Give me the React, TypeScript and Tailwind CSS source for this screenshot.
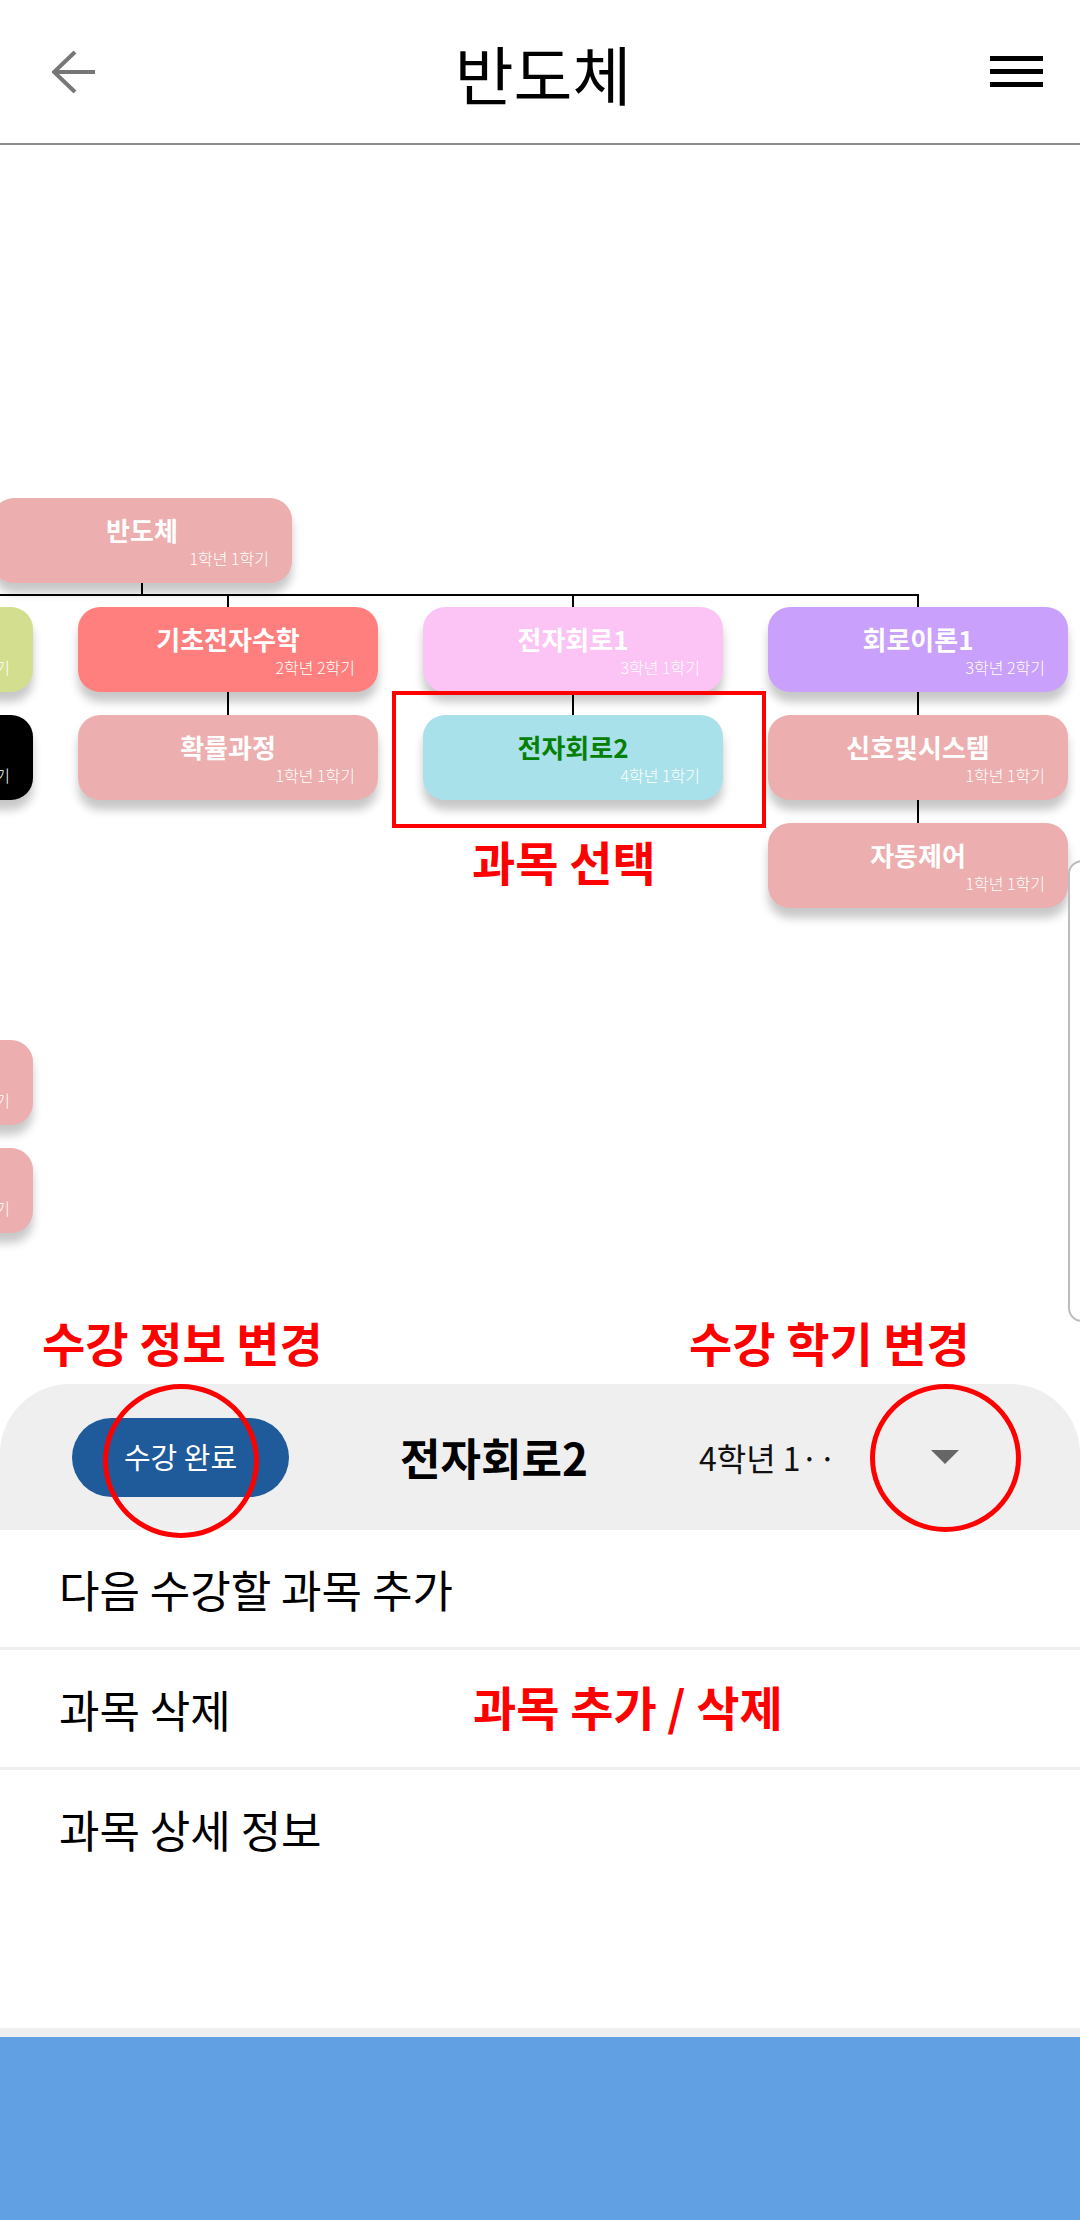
import React from "react";

type Node = {
  title: string;
  sub: string;
  left: number;
  top: number;
  bg: string;
  text?: string;
};

// columns are 300 wide with a 45px gap, rows are 85 tall with a 23px gap
const colLeft = (c: number) => 78 + (c - 1) * 345;
const rowTop = (r: number) => 462 + (r - 1) * 108;

const nodes: Node[] = [
  { title: "반도체", sub: "1학년 1학기", left: -8, top: 353, bg: "#ecaeae" },
  { title: "선형대수", sub: "1학년 1학기", left: colLeft(0), top: rowTop(1), bg: "#d3df8e" },
  { title: "물리", sub: "1학년 1학기", left: colLeft(0), top: rowTop(2), bg: "#000000" },
  { title: "공학수학", sub: "1학년 1학기", left: colLeft(0), top: 895, bg: "#ecaeae" },
  { title: "전자기학", sub: "1학년 1학기", left: colLeft(0), top: 1003, bg: "#ecaeae" },
  { title: "기초전자수학", sub: "2학년 2학기", left: colLeft(1), top: rowTop(1), bg: "#ff7f7e" },
  { title: "확률과정", sub: "1학년 1학기", left: colLeft(1), top: rowTop(2), bg: "#ecaeae" },
  { title: "전자회로1", sub: "3학년 1학기", left: colLeft(2), top: rowTop(1), bg: "#fbc4f4" },
  { title: "전자회로2", sub: "4학년 1학기", left: colLeft(2), top: rowTop(2), bg: "#a9e1ea", text: "#058005" },
  { title: "회로이론1", sub: "3학년 2학기", left: colLeft(3), top: rowTop(1), bg: "#c9a0fb" },
  { title: "신호및시스템", sub: "1학년 1학기", left: colLeft(3), top: rowTop(2), bg: "#ecaeae" },
  { title: "자동제어", sub: "1학년 1학기", left: colLeft(3), top: rowTop(3), bg: "#ecaeae" },
];

// vertical connector segments: x, top, height
const ticks = [
  { x: 141, top: 438, h: 12 },
  { x: 227, top: 449, h: 13 },
  { x: 572, top: 449, h: 13 },
  { x: 917, top: 449, h: 13 },
  { x: 227, top: 547, h: 23 },
  { x: 572, top: 547, h: 23 },
  { x: 917, top: 547, h: 23 },
  { x: 917, top: 655, h: 23 },
];

function CourseNode({ node }: { node: Node }) {
  return (
    <div
      className="absolute w-[300px] h-[85px] rounded-[22px] shadow-[0_10px_10px_rgba(0,0,0,0.22)]"
      style={{ left: node.left, top: node.top, backgroundColor: node.bg }}
    >
      <div
        className="pt-[15px] text-center text-[26px] leading-[34px] font-bold"
        style={{ color: node.text ?? "#ffffff" }}
      >
        {node.title}
      </div>
      <div className="pr-[23px] text-right text-[16px] leading-[22px] text-white font-light">
        {node.sub}
      </div>
    </div>
  );
}

const listItems = ["다음 수강할 과목 추가", "과목 삭제", "과목 상세 정보"];

export default function App() {
  return (
    <div className="relative w-[1080px] h-[2220px] flex flex-col bg-white overflow-hidden font-['Noto_Sans_CJK_KR','Noto_Sans',sans-serif]">
      {/* Header */}
      <div className="h-[145px] shrink-0 flex items-center justify-between border-b-2 border-[#8c8c8c]">
        <button className="ml-[52px] w-[44px] h-[44px]">
          <svg width="44" height="44" viewBox="0 0 44 44" fill="none">
            <path d="M23 2 L2 22 L23 42 M2 22 H43" stroke="#777777" strokeWidth="4" />
          </svg>
        </button>
        <div className="text-[64px] leading-none text-black">반도체</div>
        <button className="mr-[37px] w-[53px] flex flex-col gap-[8px]">
          <span className="block h-[5px] bg-black" />
          <span className="block h-[5px] bg-black" />
          <span className="block h-[5px] bg-black" />
        </button>
      </div>

      {/* Tree canvas */}
      <div className="relative h-[1239px] shrink-0">
        <div className="absolute left-0 top-[449px] w-[919px] h-[2px] bg-black" />
        {ticks.map((t, i) => (
          <div
            key={i}
            className="absolute w-[2px] bg-black"
            style={{ left: t.x, top: t.top, height: t.h }}
          />
        ))}
        {nodes.map((n) => (
          <CourseNode key={n.title} node={n} />
        ))}

        {/* side panel peeking in */}
        <div className="absolute left-[1068px] top-[715px] w-[40px] h-[462px] rounded-[14px] border-2 border-[#bdbdbd] bg-white" />

        {/* selection annotation */}
        <div className="absolute left-[392px] top-[546px] w-[374px] h-[137px] border-4 border-[#ff0000]" />
        <div className="absolute left-[472px] top-[690px] text-[47px] leading-[52px] font-bold text-[#ff0000]">
          과목 선택
        </div>
        <div className="absolute left-[42px] top-[1171px] text-[47px] leading-[52px] font-bold text-[#ff0000]">
          수강 정보 변경
        </div>
        <div className="absolute left-[689px] top-[1171px] text-[47px] leading-[52px] font-bold text-[#ff0000]">
          수강 학기 변경
        </div>
      </div>

      {/* Bottom sheet header */}
      <div className="h-[146px] shrink-0 flex items-center bg-[#efefef] rounded-t-[70px]">
        <div className="ml-[72px] w-[217px] h-[79px] rounded-full bg-[#1f5a9a] flex items-center justify-center text-[29px] text-white">
          수강 완료
        </div>
        <div className="w-[410px] text-center text-[44px] font-bold text-black">전자회로2</div>
        <div className="w-[200px] text-[32px] text-[#111]">4학년 1··</div>
        <svg className="ml-[32px]" width="28" height="14" viewBox="0 0 28 14">
          <path d="M0 0 H28 L14 14 Z" fill="#666666" />
        </svg>
      </div>

      {/* Action list */}
      <div className="flex flex-col">
        {listItems.map((item, i) => (
          <div
            key={item}
            className={
              i < listItems.length - 1
                ? "h-[120px] flex items-center pl-[59px] border-b-[3px] border-[#efefef] text-[44px] text-black"
                : "h-[117px] flex items-center pl-[59px] text-[44px] text-black"
            }
          >
            {item}
          </div>
        ))}
      </div>

      <div className="flex-1" />
      <div className="h-[9px] shrink-0 bg-[#efefef]" />
      <div className="h-[183px] shrink-0 bg-[#60a0e3]" />

      {/* red markers over the sheet */}
      <div className="absolute left-[103px] top-[1384px] w-[156px] h-[154px] rounded-[50%] border-[5px] border-[#ff0000]" />
      <div className="absolute left-[870px] top-[1384px] w-[151px] h-[148px] rounded-[50%] border-[5px] border-[#ff0000]" />
      <div className="absolute left-[473px] top-[1680px] text-[47px] leading-[52px] font-bold text-[#ff0000]">
        과목 추가 / 삭제
      </div>
    </div>
  );
}
